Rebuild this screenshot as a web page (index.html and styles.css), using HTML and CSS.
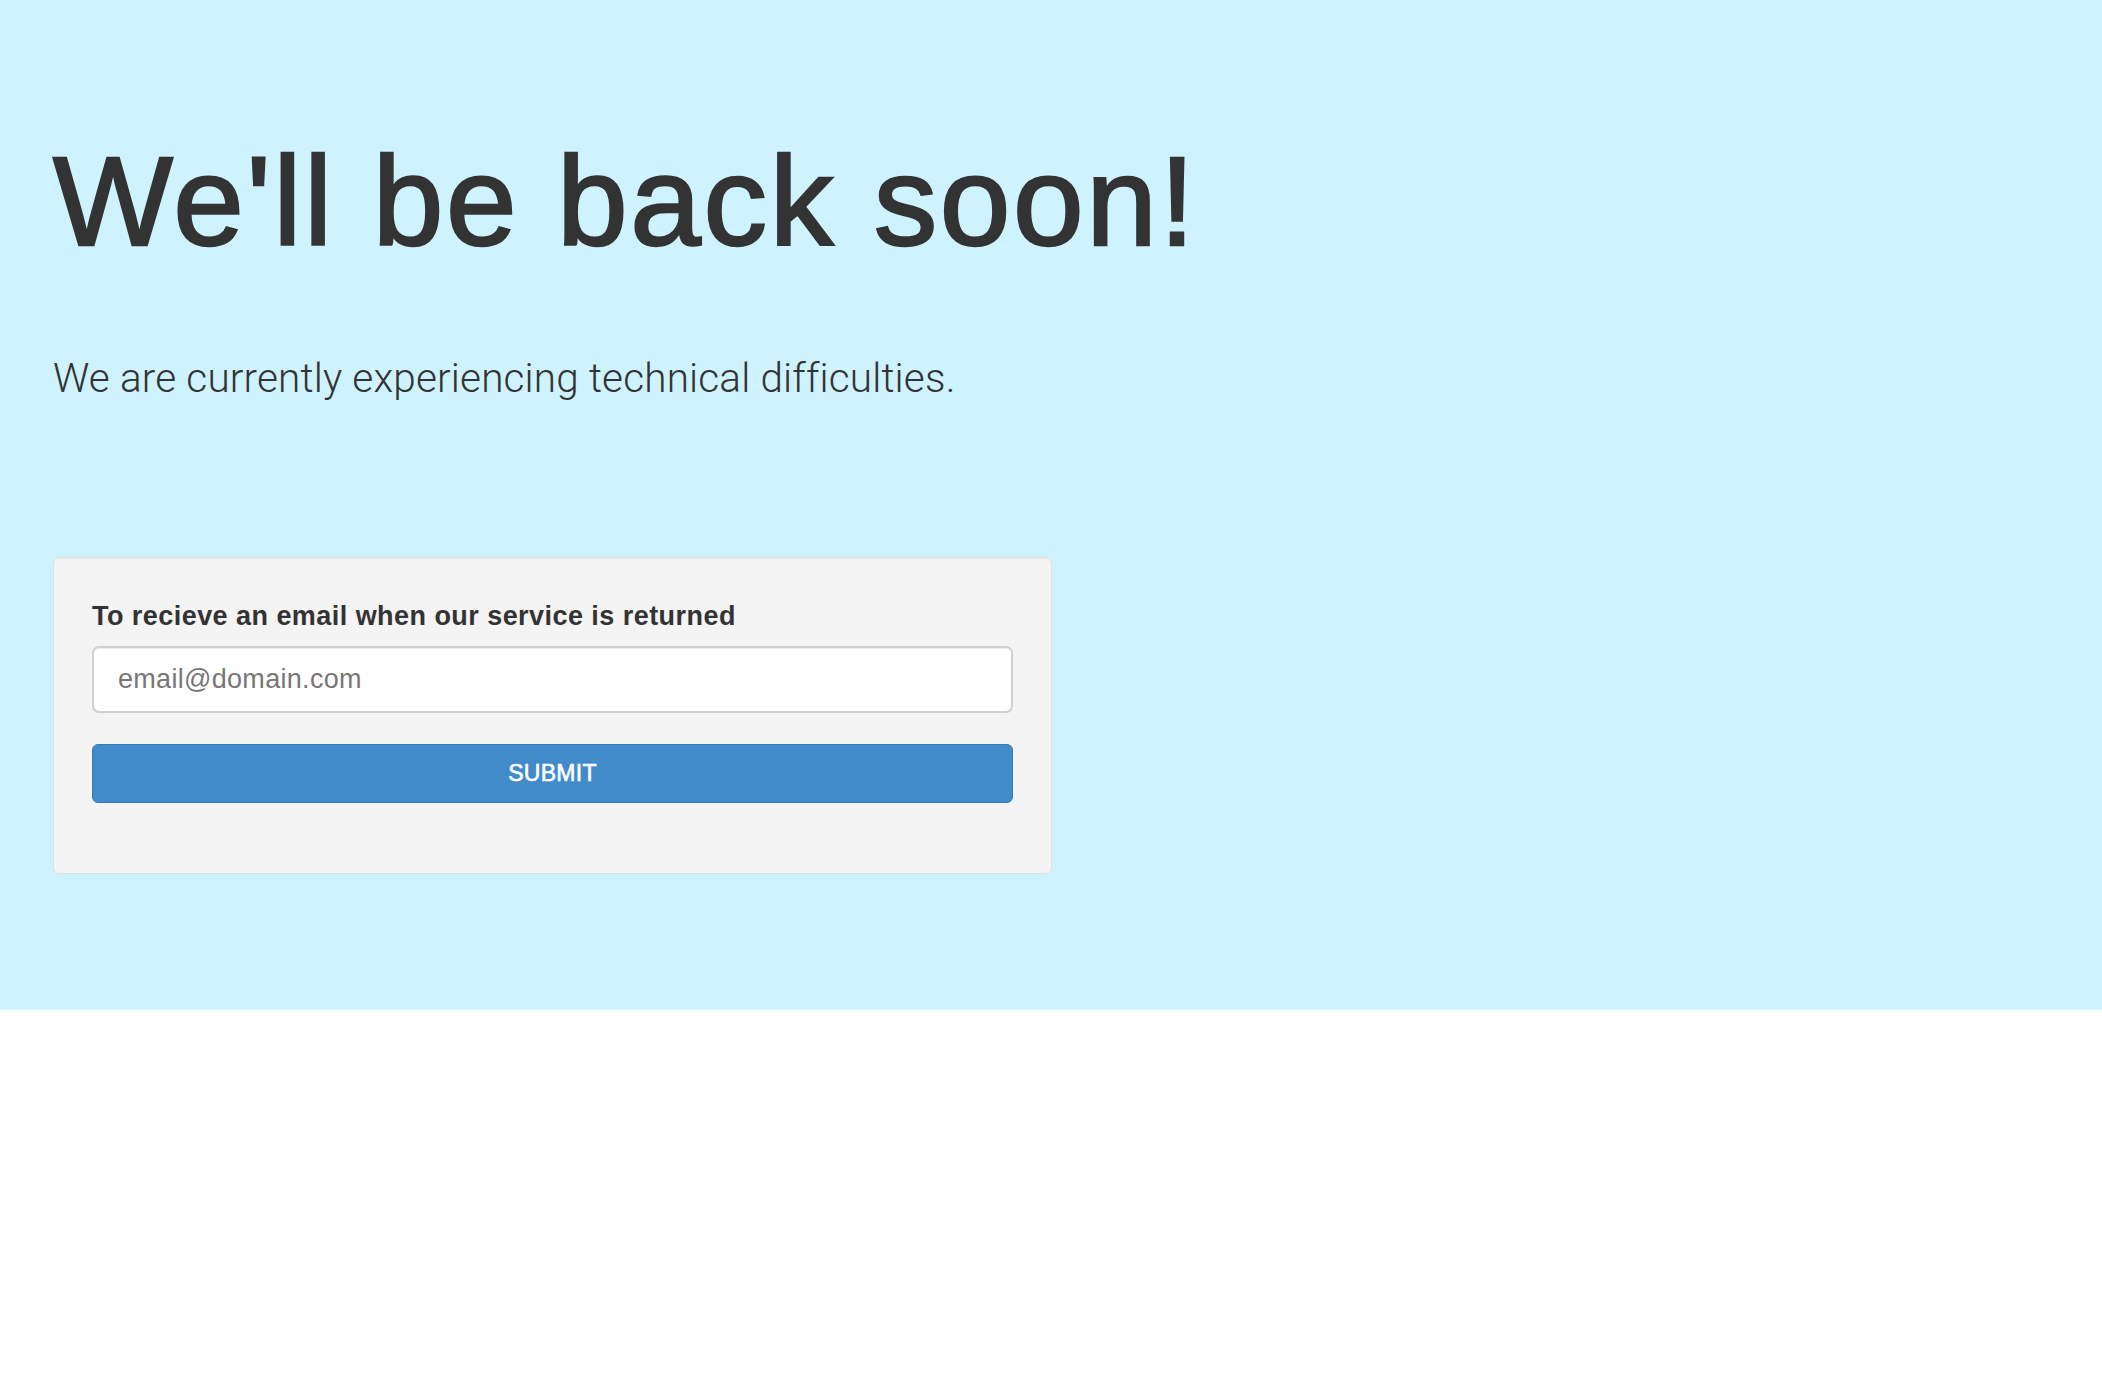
FILE: index.html
```html
<!DOCTYPE html>
<html lang="en">
<head>
<meta charset="utf-8">
<title>We'll be back soon!</title>
<link rel="stylesheet" href="styles.css">
</head>
<body>
<main class="band">
  <div class="content">
    <h1 class="title">We'll be back soon!</h1>
    <p class="lead">We are currently experiencing technical difficulties.</p>
    <form class="notify" onsubmit="return false;">
      <label class="notify-label" for="email">To recieve an email when our service is returned</label>
      <input class="notify-input" id="email" type="email" placeholder="email@domain.com">
      <button class="notify-btn" type="submit">SUBMIT</button>
    </form>
  </div>
</main>
</body>
</html>
```

FILE: styles.css
```css
html, body {
  margin: 0;
  padding: 0;
  background: #ffffff;
  color: #333333;
  font-family: "Liberation Sans", Arial, sans-serif;
}

.band {
  background: #cff2ff;
  padding: 138px 0 136px 53px;
}

.content {
  display: flex;
  flex-direction: column;
  align-items: flex-start;
}

.title {
  margin: 0;
  font-size: 127px;
  line-height: 127px;
  font-weight: normal;
  letter-spacing: 2.6px;
  -webkit-text-stroke: 2.4px #333333;
  color: #333333;
}

.lead {
  margin: 93px 0 0 0;
  font-family: "Roboto", "Liberation Sans", sans-serif;
  font-weight: 300;
  font-size: 40.5px;
  line-height: 40px;
  letter-spacing: 0.15px;
}

.notify {
  margin-top: 159px;
  width: 921px;
  padding: 45px 38px 70px 38px;
  background: #f4f4f4;
  border: 1px solid #e0e0e0;
  border-radius: 6px;
  box-shadow: inset 0 1px 1px rgba(0, 0, 0, 0.05);
  display: flex;
  flex-direction: column;
}

.notify-label {
  font-size: 27px;
  line-height: 27px;
  font-weight: bold;
  letter-spacing: 0.45px;
  color: #333333;
}

.notify-input {
  margin-top: 16px;
  height: 67px;
  box-sizing: border-box;
  width: 100%;
  padding: 0 24px;
  border: 2px solid #d0d0d0;
  border-radius: 7px;
  background: #ffffff;
  box-shadow: inset 0 1px 1px rgba(0, 0, 0, 0.075);
  font-family: "Liberation Sans", Arial, sans-serif;
  font-size: 27px;
  letter-spacing: 0.3px;
  color: #555555;
  outline: none;
}

.notify-input::placeholder {
  color: #777777;
  opacity: 1;
}

.notify-btn {
  margin-top: 31px;
  height: 59px;
  width: 100%;
  box-sizing: border-box;
  border: 1px solid #357ebd;
  border-radius: 6px;
  background: #428bca;
  color: #ffffff;
  font-family: "Liberation Sans", Arial, sans-serif;
  font-size: 23px;
  letter-spacing: 0.3px;
  -webkit-text-stroke: 0.6px #ffffff;
  cursor: pointer;
}
```
